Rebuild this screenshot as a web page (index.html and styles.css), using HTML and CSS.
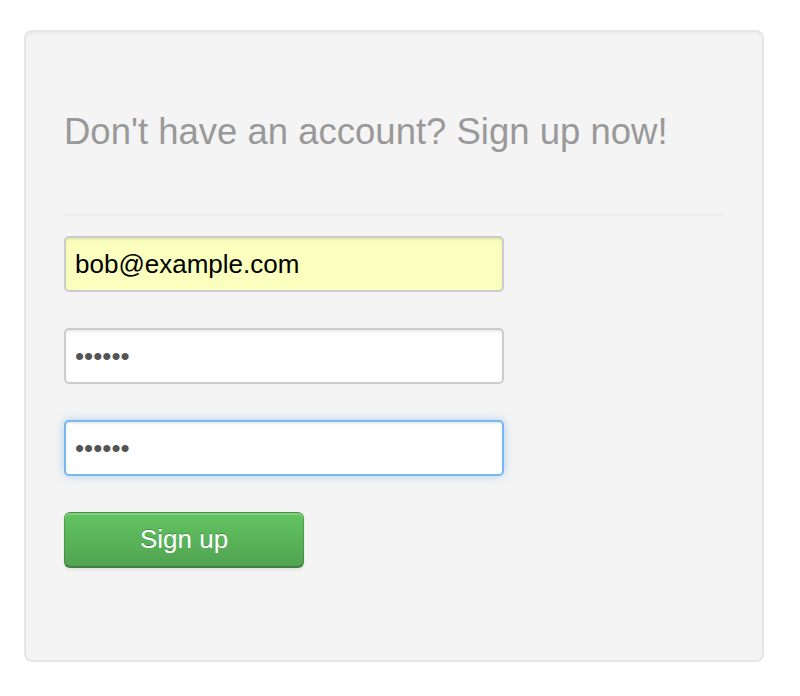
FILE: index.html
```html
<!DOCTYPE html>
<html>
<head>
<meta charset="utf-8">
<link rel="stylesheet" href="styles.css">
</head>
<body>
<div class="page">
  <form class="well">
    <h2 class="title">Don't have an account? Sign up now!</h2>
    <hr class="rule">
    <div class="fields">
      <input class="field autofill" type="email" value="bob@example.com">
      <input class="field" type="password" value="secret">
      <input class="field focused" type="password" value="secret">
      <button class="btn-success" type="button">Sign up</button>
    </div>
  </form>
</div>
</body>
</html>
```

FILE: styles.css
```css
html, body {
  margin: 0;
  padding: 0;
  background: #fff;
}
.page {
  padding: 30px 36px 34px 24px;
}
.well {
  box-sizing: border-box;
  width: 740px;
  height: 632px;
  margin: 0;
  padding: 38px;
  background: #f4f4f4;
  border: 2px solid #e6e6e6;
  border-radius: 8px;
  box-shadow: inset 0 2px 2px rgba(0,0,0,0.04);
  font-family: "Liberation Sans", Arial, Helvetica, sans-serif;
}
.title {
  margin: 42px 0 0;
  font-size: 36.5px;
  line-height: 40px;
  font-weight: normal;
  color: #999;
}
.rule {
  margin: 62px 0 0;
  border: 0;
  border-top: 2px solid #ededed;
  height: 0;
}
.fields {
  display: flex;
  flex-direction: column;
  align-items: flex-start;
  gap: 36px;
  margin-top: 20px;
}
.field {
  box-sizing: border-box;
  width: 440px;
  height: 56px;
  margin: 0;
  padding: 0 9px;
  border: 2px solid #cccccc;
  border-radius: 5px;
  background: #fff;
  box-shadow: inset 0 2px 2px rgba(0,0,0,0.075);
  font-family: "Liberation Sans", Arial, Helvetica, sans-serif;
  font-size: 26px;
  color: #555;
  outline: none;
}
.autofill {
  background: #faffbd;
  color: #000;
}
.focused {
  border-color: #78b7ef;
  box-shadow: inset 0 2px 2px rgba(0,0,0,0.075), 0 0 10px rgba(82,168,236,0.45);
}
.btn-success {
  box-sizing: border-box;
  width: 240px;
  height: 56px;
  margin: 0;
  padding: 0;
  border: 1px solid rgba(0,0,0,0.15);
  border-bottom: 2px solid rgba(0,0,0,0.35);
  border-radius: 6px;
  background: linear-gradient(to bottom, #62c462, #51a351);
  box-shadow: inset 0 2px 0 rgba(255,255,255,0.2), 0 2px 3px rgba(0,0,0,0.08);
  color: #fff;
  font-family: "Liberation Sans", Arial, Helvetica, sans-serif;
  font-size: 26px;
  text-shadow: 0 -1px 0 rgba(0,0,0,0.25);
  cursor: pointer;
}
```
